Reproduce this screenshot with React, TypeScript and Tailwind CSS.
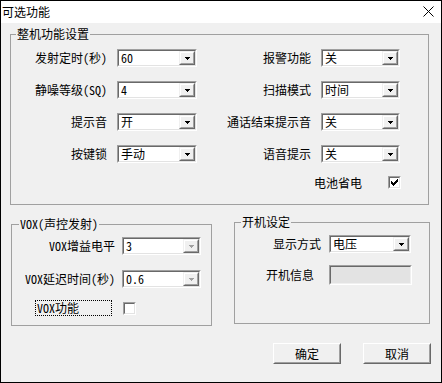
import React from "react";

function Arrow({ disabled }: { disabled?: boolean }) {
  return (
    <div className="w-[16px] h-full border border-t-[#f0f0f0] border-l-[#f0f0f0] border-b-[#696969] border-r-[#696969]">
      <div className="w-full h-full border border-t-white border-l-white border-b-[#a0a0a0] border-r-[#a0a0a0] bg-[#f0f0f0] flex items-center justify-center">
        <svg width="5" height="3" viewBox="0 0 5 3" shapeRendering="crispEdges">
          <path d="M0 0h5v1H0z M1 1h3v1H1z M2 2h1v1H2z" fill={disabled ? "#a0a0a0" : "#000"} />
        </svg>
      </div>
    </div>
  );
}

function Combo({ value, w, disabled }: { value: string; w: string; disabled?: boolean }) {
  return (
    <div className={`${w} h-[18px] shrink-0 border border-t-[#a0a0a0] border-l-[#a0a0a0] border-b-white border-r-white`}>
      <div className="w-full h-full border border-t-[#696969] border-l-[#696969] border-b-[#e3e3e3] border-r-[#e3e3e3] bg-white flex items-center">
        <div className="flex-1 pl-[2px] leading-[14px] whitespace-nowrap">{value}</div>
        <Arrow disabled={disabled} />
      </div>
    </div>
  );
}

function Check({ checked }: { checked?: boolean }) {
  return (
    <div className="w-[13px] h-[13px] shrink-0 border border-t-[#a0a0a0] border-l-[#a0a0a0] border-b-white border-r-white">
      <div className="w-full h-full border border-t-[#696969] border-l-[#696969] border-b-[#e3e3e3] border-r-[#e3e3e3] bg-white flex items-center justify-center">
        {checked && (
          <svg width="7" height="7" viewBox="0 0 7 7" shapeRendering="crispEdges">
            <path
              d="M0 2h1v3H0z M1 3h1v3H1z M2 4h1v3H2z M3 3h1v3H3z M4 2h1v3H4z M5 1h1v3H5z M6 0h1v3H6z"
              fill="#000"
            />
          </svg>
        )}
      </div>
    </div>
  );
}

function Button({ label }: { label: string }) {
  return (
    <div className="w-[68px] h-[21px] border border-t-white border-l-white border-b-[#696969] border-r-[#696969]">
      <div className="w-full h-full border border-t-[#f0f0f0] border-l-[#f0f0f0] border-b-[#a0a0a0] border-r-[#a0a0a0] bg-[#f0f0f0] flex items-center justify-center leading-[14px]">
        {label}
      </div>
    </div>
  );
}

function Row({ l, lv, r, rv }: { l: string; lv: string; r: string; rv: string }) {
  return (
    <div className="flex items-center h-[18px]">
      <div className="w-[96px] text-right leading-[14px] whitespace-nowrap">{l}</div>
      <div className="ml-[10px]">
        <Combo value={lv} w="w-[80px]" />
      </div>
      <div className="w-[114px] text-right leading-[14px] whitespace-nowrap">{r}</div>
      <div className="ml-[10px]">
        <Combo value={rv} w="w-[79px]" />
      </div>
    </div>
  );
}

export default function App() {
  return (
    <div className="w-[442px] h-[383px] border border-black bg-[#f0f0f0] flex flex-col text-black text-[12px] font-['Noto_Sans_Mono_CJK_SC','Noto_Sans_CJK_SC',sans-serif] overflow-hidden">
      <div className="h-[22px] shrink-0 bg-white flex justify-between pl-[1px] pr-[7px]">
        <span className="leading-[14px] mt-[4px]">可选功能</span>
        <svg width="11" height="11" viewBox="0 0 11 11" className="mt-[5px]">
          <path d="M0.5 0.5L10.5 10.5M10.5 0.5L0.5 10.5" stroke="#000" strokeWidth="1" />
        </svg>
      </div>
      <div className="flex flex-col pl-[9px]">
        <fieldset className="mt-[4px] w-[419px] border border-[#a0a0a0]">
          <legend className="ml-[5px] px-[1px] leading-[14px]">整机功能设置</legend>
          <div className="flex flex-col pt-[8px] gap-[14px]">
            <Row l="发射定时(秒)" lv="60" r="报警功能" rv="关" />
            <Row l="静噪等级(SQ)" lv="4" r="扫描模式" rv="时间" />
            <Row l="提示音" lv="开" r="通话结束提示音" rv="关" />
            <Row l="按键锁" lv="手动" r="语音提示" rv="关" />
          </div>
          <div className="flex items-center h-[13px] mt-[13px] mb-[15px]">
            <div className="ml-[303px] leading-[14px]">电池省电</div>
            <div className="ml-[26px]">
              <Check checked />
            </div>
          </div>
        </fieldset>

        <div className="flex items-start mt-[10px]">
          <fieldset className="mt-[2px] ml-[1px] w-[201px] border border-[#a0a0a0]">
            <legend className="ml-[7px] px-[1px] leading-[14px]">VOX(声控发射)</legend>
            <div className="flex items-center h-[18px] mt-[6px]">
              <div className="w-[103px] text-right leading-[14px] whitespace-nowrap">VOX增益电平</div>
              <div className="ml-[7px]">
                <Combo value="3" w="w-[79px]" disabled />
              </div>
            </div>
            <div className="flex items-center h-[18px] mt-[15px]">
              <div className="w-[103px] text-right leading-[14px] whitespace-nowrap">VOX延迟时间(秒)</div>
              <div className="ml-[7px]">
                <Combo value="0.6" w="w-[79px]" disabled />
              </div>
            </div>
            <div className="flex items-center h-[16px] mt-[12px] mb-[9px]">
              <div className="ml-[23px] w-[77px] h-[16px] border border-dotted border-black pl-[1px] leading-[14px] whitespace-nowrap">
                VOX功能
              </div>
              <div className="ml-[11px]">
                <Check />
              </div>
            </div>
          </fieldset>

          <fieldset className="ml-[22px] w-[196px] border border-[#a0a0a0]">
            <legend className="ml-[6px] px-[1px] leading-[14px]">开机设定</legend>
            <div className="flex items-center h-[18px] mt-[6px]">
              <div className="w-[86px] text-right leading-[14px]">显示方式</div>
              <div className="ml-[8px]">
                <Combo value="电压" w="w-[82px]" />
              </div>
            </div>
            <div className="flex items-center h-[20px] mt-[12px] mb-[38px]">
              <div className="w-[86px] pr-[7px] text-right leading-[14px]">开机信息</div>
              <div className="ml-[8px] w-[83px] h-[20px] border border-t-[#a0a0a0] border-l-[#a0a0a0] border-b-white border-r-white">
                <div className="w-full h-full border border-t-[#696969] border-l-[#696969] border-b-[#f0f0f0] border-r-[#f0f0f0] bg-[#e3e3e3]" />
              </div>
            </div>
          </fieldset>
        </div>

        <div className="flex mt-[17px]">
          <div className="ml-[263px]">
            <Button label="确定" />
          </div>
          <div className="ml-[22px]">
            <Button label="取消" />
          </div>
        </div>
      </div>
    </div>
  );
}
